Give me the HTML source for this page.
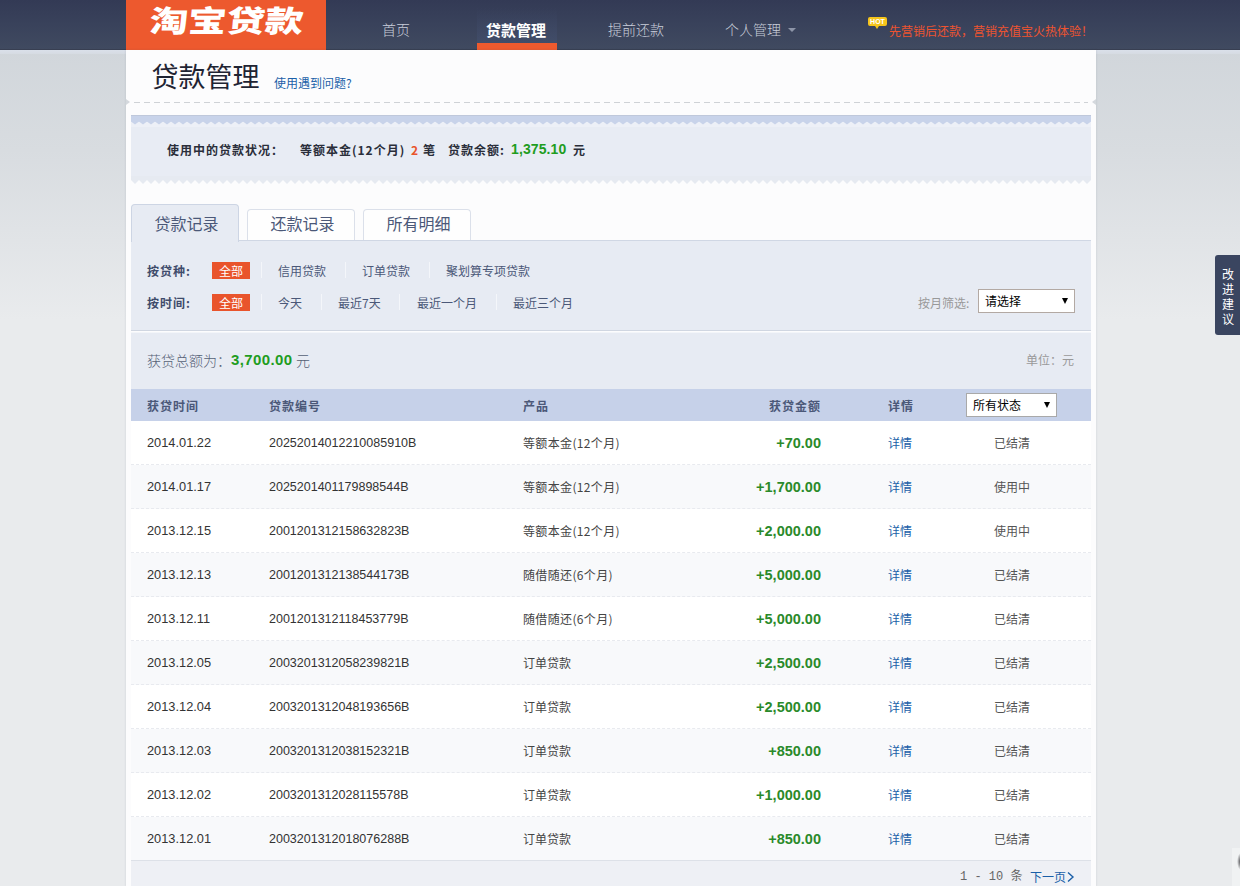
<!DOCTYPE html>
<html lang="zh-CN">
<head>
<meta charset="utf-8">
<title>淘宝贷款 - 贷款管理</title>
<style>
*{margin:0;padding:0;box-sizing:border-box;}
html,body{width:1240px;height:886px;overflow:hidden;}
body{position:relative;font-family:"Liberation Sans","Noto Sans CJK SC",sans-serif;font-size:12px;color:#3c3c3c;
  background:#e9ebed linear-gradient(to bottom,#d1d6db 0,#d1d6db 50px,#d8dce0 150px,#e9ebed 320px,#e9ebed 100%);}
.abs{position:absolute;white-space:nowrap;line-height:1;}
a{text-decoration:none;color:#1a5fa8;}

/* header */
#hd{position:absolute;left:0;top:0;width:1240px;height:50px;background:linear-gradient(to bottom,#333a55 0,#39425b 50%,#404a60 100%);border-bottom:1px solid #383f52;}
#logo{position:absolute;left:126px;top:0;width:200px;height:50px;background:#ed592e;overflow:hidden;}
#logo span{position:absolute;left:23.5px;top:1px;font-family:"Noto Sans CJK SC","WenQuanYi Zen Hei",sans-serif;font-weight:900;font-size:30px;line-height:36px;color:#fff;letter-spacing:0;transform-origin:0 50%;transform:scaleX(1.28) skewX(-4deg);white-space:nowrap;}
.nav{position:absolute;top:20.5px;font-size:14px;line-height:16px;color:#c9ceda;white-space:nowrap;font-family:"Noto Sans CJK SC",sans-serif;font-weight:300;}
#navon{position:absolute;left:477px;top:8px;width:80px;height:42px;background:linear-gradient(to bottom,rgba(70,84,120,0) 0,rgba(70,84,120,.4) 100%);border-bottom:7px solid #ee5a2e;}
#navon span{position:absolute;left:-1px;width:80px;text-align:center;top:13.5px;font-size:15px;line-height:16px;color:#fff;font-weight:700;font-family:"Noto Sans CJK SC",sans-serif;}
#caret{position:absolute;left:787.5px;top:28px;width:0;height:0;border-left:4px solid transparent;border-right:4px solid transparent;border-top:4px solid #8d95a8;}
#hot{position:absolute;left:868px;top:17px;width:19px;height:9px;background:#f6c51b;border-radius:2px;color:#fff;font-size:7px;line-height:9px;font-weight:700;text-align:center;font-family:"Liberation Sans",sans-serif;}
#hot:after{content:"";position:absolute;left:6.5px;top:9px;border-left:2.5px solid transparent;border-right:2.5px solid transparent;border-top:3px solid #f6c51b;}
#promo{left:889px;top:25px;font-size:12px;color:#ee5430;font-family:"Noto Sans CJK SC",sans-serif;}

/* main panel */
#panel{position:absolute;left:126px;top:50px;width:970px;height:836px;background:#fcfcfd;box-shadow:0 0 2px rgba(60,70,90,.18);}
#title{left:151.5px;top:58px;font-size:27px;line-height:36px;color:#1f2433;font-family:"Noto Sans CJK SC",sans-serif;font-weight:400;}
#help{left:274px;top:76px;font-size:12px;line-height:14px;color:#1a5fa8;font-family:"Noto Sans CJK SC",sans-serif;}
#dash{position:absolute;left:134px;top:102px;width:954px;height:1px;background:repeating-linear-gradient(to right,#cfd2d6 0,#cfd2d6 6px,transparent 6px,transparent 10px);}
.notchL{position:absolute;left:126px;top:99px;width:0;height:0;border-top:3.5px solid transparent;border-bottom:3.5px solid transparent;border-left:4px solid #d4d8dd;}
.notchR{position:absolute;left:1092px;top:99px;width:0;height:0;border-top:3.5px solid transparent;border-bottom:3.5px solid transparent;border-right:4px solid #d4d8dd;}

/* summary box */
#sum{position:absolute;left:131px;top:115px;width:960px;height:70px;}
#sum svg{position:absolute;left:0;top:0;}
.sb{font-weight:700;font-size:12px;color:#2a2e3a;font-family:"Noto Sans CJK SC",sans-serif;letter-spacing:1px;}
/* tabs */
.tab{position:absolute;width:108px;padding-left:3px;border:1px solid #dbe0ea;border-bottom:none;border-radius:4px 4px 0 0;background:#fefefe;text-align:center;font-size:16px;color:#4b5878;font-family:"Noto Sans CJK SC",sans-serif;font-weight:400;white-space:nowrap;}
.tab.on{background:#e7ebf3;border-color:#cdd5e4;}
#filt{position:absolute;left:131px;top:240px;width:960px;height:91px;background:#e7ebf3;border-top:1px solid #d0d7e4;border-bottom:1px solid #d0d6e1;}
.fl{font-weight:700;font-size:12px;color:#3f4b6b;font-family:"Noto Sans CJK SC",sans-serif;letter-spacing:1px;}
.fi{font-size:12px;color:#4b5878;font-family:"Noto Sans CJK SC",sans-serif;}
.badge{position:absolute;width:38px;height:17px;background:#e9542c;color:#fff;font-size:12px;line-height:17px;text-align:center;font-family:"Noto Sans CJK SC",sans-serif;}
.sep{position:absolute;width:1px;height:16px;background:#f4f6fa;}
.sel{position:absolute;background:#fff;border:1px solid #b3a9a3;font-size:12px;color:#000;font-family:"Noto Sans CJK SC",sans-serif;white-space:nowrap;}
.sel i{position:absolute;width:0;height:0;border-left:3.5px solid transparent;border-right:3.5px solid transparent;border-top:6px solid #000;}

#bal{font-family:"Liberation Sans",sans-serif;font-weight:700;font-size:14px;color:#1f9d1f;letter-spacing:.1px;}
#tot{position:absolute;left:131px;top:332px;width:960px;height:57px;background:#e7ebf3;border-top:1px solid #f3f5f9;}
#th{position:absolute;left:131px;top:388.5px;width:960px;height:32px;background:#c6d1e9;}
.h{font-weight:700;font-size:12px;color:#4b5878;font-family:"Noto Sans CJK SC",sans-serif;letter-spacing:1px;}
.row{position:absolute;left:131px;width:960px;height:44px;background:#fff;border-bottom:1px dashed #e8eaef;}
.row.alt{background:#f8f9fb;}
.row span,.row a{position:absolute;top:15px;line-height:14px;white-space:nowrap;}
.c1,.c2{font-family:"Liberation Sans",sans-serif;font-size:12.8px;color:#333;}
.c1{left:16px}.c2{left:138px;font-size:12.5px}
.c3{left:392px;font-family:"Noto Sans CJK SC",sans-serif;font-size:12px;color:#444;}
.c3p{letter-spacing:.35px;}
.c4{right:270px;font-family:"Liberation Sans",sans-serif;font-weight:700;font-size:14.5px;color:#2a8a2a;}
.c5{left:757px;font-family:"Noto Sans CJK SC",sans-serif;font-size:12px;color:#1a5fa8;}
.c6{left:863px;font-family:"Noto Sans CJK SC",sans-serif;font-size:12px;color:#555;}
#ft{position:absolute;left:131px;top:860px;width:960px;height:26px;background:#eef0f5;border-top:1px solid #dde1e8;}
#side{position:absolute;left:1215px;top:255px;width:25px;height:80px;background:#3a4560;border-radius:3px 0 0 3px;color:#fff;font-size:12px;line-height:15px;text-align:center;padding:11px 0 0 7px;font-family:"Noto Sans CJK SC",sans-serif;width:25px;}
#side span{display:block;width:12px;}
</style>
</head>
<body>
<div id="hd">
  <div id="logo"><span>淘宝贷款</span></div>
  <div class="nav" style="left:382px">首页</div>
  <div id="navon"><span>贷款管理</span></div>
  <div class="nav" style="left:608px">提前还款</div>
  <div class="nav" style="left:725px">个人管理</div>
  <div id="caret"></div>
  <div id="hot">HOT</div>
  <div id="promo" class="abs">先营销后还款，营销充值宝火热体验！</div>
</div>
<div style="position:absolute;left:0;top:50px;width:1240px;height:4px;background:linear-gradient(to bottom,#dae0ea,#d6dbe2);"></div>
<div id="panel"></div>
<div id="title" class="abs">贷款管理</div>
<a id="help" class="abs">使用遇到问题?</a>
<div id="dash"></div><div class="notchL"></div><div class="notchR"></div>

<div id="sum">
<svg width="960" height="70" viewBox="0 0 960 70">
  <rect x="0" y="0" width="960" height="65" fill="#e8ecf4"/>
  <rect x="0" y="61" width="960" height="4" fill="#e6eaf1"/>
  <path d="M0 64L0 65L4 69L8 65L12 69L16 65L20 69L24 65L28 69L32 65L36 69L40 65L44 69L48 65L52 69L56 65L60 69L64 65L68 69L72 65L76 69L80 65L84 69L88 65L92 69L96 65L100 69L104 65L108 69L112 65L116 69L120 65L124 69L128 65L132 69L136 65L140 69L144 65L148 69L152 65L156 69L160 65L164 69L168 65L172 69L176 65L180 69L184 65L188 69L192 65L196 69L200 65L204 69L208 65L212 69L216 65L220 69L224 65L228 69L232 65L236 69L240 65L244 69L248 65L252 69L256 65L260 69L264 65L268 69L272 65L276 69L280 65L284 69L288 65L292 69L296 65L300 69L304 65L308 69L312 65L316 69L320 65L324 69L328 65L332 69L336 65L340 69L344 65L348 69L352 65L356 69L360 65L364 69L368 65L372 69L376 65L380 69L384 65L388 69L392 65L396 69L400 65L404 69L408 65L412 69L416 65L420 69L424 65L428 69L432 65L436 69L440 65L444 69L448 65L452 69L456 65L460 69L464 65L468 69L472 65L476 69L480 65L484 69L488 65L492 69L496 65L500 69L504 65L508 69L512 65L516 69L520 65L524 69L528 65L532 69L536 65L540 69L544 65L548 69L552 65L556 69L560 65L564 69L568 65L572 69L576 65L580 69L584 65L588 69L592 65L596 69L600 65L604 69L608 65L612 69L616 65L620 69L624 65L628 69L632 65L636 69L640 65L644 69L648 65L652 69L656 65L660 69L664 65L668 69L672 65L676 69L680 65L684 69L688 65L692 69L696 65L700 69L704 65L708 69L712 65L716 69L720 65L724 69L728 65L732 69L736 65L740 69L744 65L748 69L752 65L756 69L760 65L764 69L768 65L772 69L776 65L780 69L784 65L788 69L792 65L796 69L800 65L804 69L808 65L812 69L816 65L820 69L824 65L828 69L832 65L836 69L840 65L844 69L848 65L852 69L856 65L860 69L864 65L868 69L872 65L876 69L880 65L884 69L888 65L892 69L896 65L900 69L904 65L908 69L912 65L916 69L920 65L924 69L928 65L932 69L936 65L940 69L944 65L948 69L952 65L956 69L960 65L960 64Z" fill="#e6eaf1"/>
  <rect x="0" y="6" width="960" height="6" fill="#edf0f7"/>
  <rect x="0" y="0" width="960" height="6.5" fill="#c8d3ea"/>
  <rect x="0" y="0" width="960" height="1" fill="#bfc8db"/>
  <path d="M0 5.5L0 6.5L4 9.5L8 6.5L12 9.5L16 6.5L20 9.5L24 6.5L28 9.5L32 6.5L36 9.5L40 6.5L44 9.5L48 6.5L52 9.5L56 6.5L60 9.5L64 6.5L68 9.5L72 6.5L76 9.5L80 6.5L84 9.5L88 6.5L92 9.5L96 6.5L100 9.5L104 6.5L108 9.5L112 6.5L116 9.5L120 6.5L124 9.5L128 6.5L132 9.5L136 6.5L140 9.5L144 6.5L148 9.5L152 6.5L156 9.5L160 6.5L164 9.5L168 6.5L172 9.5L176 6.5L180 9.5L184 6.5L188 9.5L192 6.5L196 9.5L200 6.5L204 9.5L208 6.5L212 9.5L216 6.5L220 9.5L224 6.5L228 9.5L232 6.5L236 9.5L240 6.5L244 9.5L248 6.5L252 9.5L256 6.5L260 9.5L264 6.5L268 9.5L272 6.5L276 9.5L280 6.5L284 9.5L288 6.5L292 9.5L296 6.5L300 9.5L304 6.5L308 9.5L312 6.5L316 9.5L320 6.5L324 9.5L328 6.5L332 9.5L336 6.5L340 9.5L344 6.5L348 9.5L352 6.5L356 9.5L360 6.5L364 9.5L368 6.5L372 9.5L376 6.5L380 9.5L384 6.5L388 9.5L392 6.5L396 9.5L400 6.5L404 9.5L408 6.5L412 9.5L416 6.5L420 9.5L424 6.5L428 9.5L432 6.5L436 9.5L440 6.5L444 9.5L448 6.5L452 9.5L456 6.5L460 9.5L464 6.5L468 9.5L472 6.5L476 9.5L480 6.5L484 9.5L488 6.5L492 9.5L496 6.5L500 9.5L504 6.5L508 9.5L512 6.5L516 9.5L520 6.5L524 9.5L528 6.5L532 9.5L536 6.5L540 9.5L544 6.5L548 9.5L552 6.5L556 9.5L560 6.5L564 9.5L568 6.5L572 9.5L576 6.5L580 9.5L584 6.5L588 9.5L592 6.5L596 9.5L600 6.5L604 9.5L608 6.5L612 9.5L616 6.5L620 9.5L624 6.5L628 9.5L632 6.5L636 9.5L640 6.5L644 9.5L648 6.5L652 9.5L656 6.5L660 9.5L664 6.5L668 9.5L672 6.5L676 9.5L680 6.5L684 9.5L688 6.5L692 9.5L696 6.5L700 9.5L704 6.5L708 9.5L712 6.5L716 9.5L720 6.5L724 9.5L728 6.5L732 9.5L736 6.5L740 9.5L744 6.5L748 9.5L752 6.5L756 9.5L760 6.5L764 9.5L768 6.5L772 9.5L776 6.5L780 9.5L784 6.5L788 9.5L792 6.5L796 9.5L800 6.5L804 9.5L808 6.5L812 9.5L816 6.5L820 9.5L824 6.5L828 9.5L832 6.5L836 9.5L840 6.5L844 9.5L848 6.5L852 9.5L856 6.5L860 9.5L864 6.5L868 9.5L872 6.5L876 9.5L880 6.5L884 9.5L888 6.5L892 9.5L896 6.5L900 9.5L904 6.5L908 9.5L912 6.5L916 9.5L920 6.5L924 9.5L928 6.5L932 9.5L936 6.5L940 9.5L944 6.5L948 9.5L952 6.5L956 9.5L960 6.5L960 5.5Z" fill="#c8d3ea"/>
</svg>
</div>
<div class="abs sb" style="left:167px;top:144px;">使用中的贷款状况：</div>
<div class="abs sb" style="left:300px;top:144px;">等额本金(12个月)</div>
<div class="abs sb" style="left:411px;top:144px;color:#e9542c;">2</div>
<div class="abs sb" style="left:423px;top:144px;">笔</div>
<div class="abs sb" style="left:448px;top:144px;">贷款余额:</div>
<div class="abs" id="bal" style="left:511px;top:142px;">1,375.10</div>
<div class="abs sb" style="left:573px;top:144px;">元</div>

<div class="tab on" style="left:131px;top:204px;height:38px;line-height:36px;z-index:2;border-width:1px;">贷款记录</div>
<div class="tab" style="left:247px;top:209px;height:32px;line-height:27px;">还款记录</div>
<div class="tab" style="left:363px;top:209px;height:32px;line-height:27px;">所有明细</div>
<div id="filt"></div>
<div class="abs fl" style="left:147px;top:265px;">按贷种:</div>
<div class="badge" style="left:212px;top:261.5px;">全部</div>
<div class="sep" style="left:261px;top:262px"></div>
<div class="abs fi" style="left:278px;top:265px;">信用贷款</div>
<div class="sep" style="left:345px;top:262px"></div>
<div class="abs fi" style="left:362px;top:265px;">订单贷款</div>
<div class="sep" style="left:429px;top:262px"></div>
<div class="abs fi" style="left:446px;top:265px;">聚划算专项贷款</div>
<div class="abs fl" style="left:147px;top:297px;">按时间:</div>
<div class="badge" style="left:212px;top:293.5px;">全部</div>
<div class="sep" style="left:261px;top:294px"></div>
<div class="abs fi" style="left:278px;top:297px;">今天</div>
<div class="sep" style="left:321px;top:294px"></div>
<div class="abs fi" style="left:338px;top:297px;">最近7天</div>
<div class="sep" style="left:399px;top:294px"></div>
<div class="abs fi" style="left:417px;top:297px;">最近一个月</div>
<div class="sep" style="left:496px;top:294px"></div>
<div class="abs fi" style="left:513px;top:297px;">最近三个月</div>
<div class="abs" style="left:918px;top:297px;font-size:12px;color:#999;font-family:'Noto Sans CJK SC',sans-serif;">按月筛选:</div>
<div class="sel" style="left:978px;top:289px;width:97px;height:24px;line-height:22px;padding-left:6px;">请选择<i style="left:83px;top:8px"></i></div>

<div id="tot"></div>
<div class="abs" style="left:147px;top:353px;font-size:14px;color:#556075;font-family:'Noto Sans CJK SC',sans-serif;font-weight:300;">获贷总额为：</div>
<div class="abs" id="totv" style="left:231px;top:352px;font-family:'Liberation Sans',sans-serif;font-weight:700;font-size:15px;color:#1f9d1f;letter-spacing:.4px;">3,700.00</div>
<div class="abs" style="left:296px;top:353px;font-size:14px;color:#556075;font-family:'Noto Sans CJK SC',sans-serif;font-weight:300;">元</div>
<div class="abs" style="left:1026px;top:354px;font-size:12px;color:#999;font-family:'Noto Sans CJK SC',sans-serif;">单位：元</div>
<div id="th"></div>
<div class="abs h" style="left:147px;top:400px;">获贷时间</div>
<div class="abs h" style="left:269px;top:400px;">贷款编号</div>
<div class="abs h" style="left:523px;top:400px;">产品</div>
<div class="abs h" style="left:769px;top:400px;">获贷金额</div>
<div class="abs h" style="left:888px;top:400px;">详情</div>
<div class="sel" style="left:966px;top:393px;width:91px;height:24px;line-height:22px;padding-left:6px;border-color:#a9a9a9;">所有状态<i style="left:77px;top:8px"></i></div>
<div class="row" style="top:420.5px"><span class="c1">2014.01.22</span><span class="c2">20252014012210085910B</span><span class="c3 c3p">等额本金(12个月)</span><span class="c4">+70.00</span><a class="c5">详情</a><span class="c6">已结清</span></div>
<div class="row alt" style="top:464.5px"><span class="c1">2014.01.17</span><span class="c2">2025201401179898544B</span><span class="c3 c3p">等额本金(12个月)</span><span class="c4">+1,700.00</span><a class="c5">详情</a><span class="c6">使用中</span></div>
<div class="row" style="top:508.5px"><span class="c1">2013.12.15</span><span class="c2">2001201312158632823B</span><span class="c3 c3p">等额本金(12个月)</span><span class="c4">+2,000.00</span><a class="c5">详情</a><span class="c6">使用中</span></div>
<div class="row alt" style="top:552.5px"><span class="c1">2013.12.13</span><span class="c2">2001201312138544173B</span><span class="c3 c3p">随借随还(6个月)</span><span class="c4">+5,000.00</span><a class="c5">详情</a><span class="c6">已结清</span></div>
<div class="row" style="top:596.5px"><span class="c1">2013.12.11</span><span class="c2">2001201312118453779B</span><span class="c3 c3p">随借随还(6个月)</span><span class="c4">+5,000.00</span><a class="c5">详情</a><span class="c6">已结清</span></div>
<div class="row alt" style="top:640.5px"><span class="c1">2013.12.05</span><span class="c2">2003201312058239821B</span><span class="c3">订单贷款</span><span class="c4">+2,500.00</span><a class="c5">详情</a><span class="c6">已结清</span></div>
<div class="row" style="top:684.5px"><span class="c1">2013.12.04</span><span class="c2">2003201312048193656B</span><span class="c3">订单贷款</span><span class="c4">+2,500.00</span><a class="c5">详情</a><span class="c6">已结清</span></div>
<div class="row alt" style="top:728.5px"><span class="c1">2013.12.03</span><span class="c2">2003201312038152321B</span><span class="c3">订单贷款</span><span class="c4">+850.00</span><a class="c5">详情</a><span class="c6">已结清</span></div>
<div class="row" style="top:772.5px"><span class="c1">2013.12.02</span><span class="c2">2003201312028115578B</span><span class="c3">订单贷款</span><span class="c4">+1,000.00</span><a class="c5">详情</a><span class="c6">已结清</span></div>
<div class="row alt" style="top:816.5px"><span class="c1">2013.12.01</span><span class="c2">2003201312018076288B</span><span class="c3">订单贷款</span><span class="c4">+850.00</span><a class="c5">详情</a><span class="c6">已结清</span></div>
<div id="ft"></div>
<div class="abs" style="left:960px;top:871px;font-size:12px;color:#666;font-family:'Liberation Mono','Noto Sans CJK SC',monospace;">1 - 10 条</div>
<a class="abs" style="left:1030px;top:871px;font-size:12px;font-family:'Noto Sans CJK SC',sans-serif;">下一页</a>
<svg class="abs" style="left:1066px;top:871px" width="9" height="12" viewBox="0 0 9 12"><path d="M2 1.5L7 6L2 10.5" fill="none" stroke="#1a5fa8" stroke-width="1.4"/></svg>
<div style="position:absolute;left:1232px;top:848px;width:8px;height:38px;background:rgba(245,246,247,.6);"></div><div style="position:absolute;left:1237px;top:853px;width:7px;height:17px;border-radius:50%;background:radial-gradient(closest-side,rgba(40,40,45,.85),rgba(40,40,45,0));"></div>
<div id="side"><span>改</span><span>进</span><span>建</span><span>议</span></div>


</body>
</html>
